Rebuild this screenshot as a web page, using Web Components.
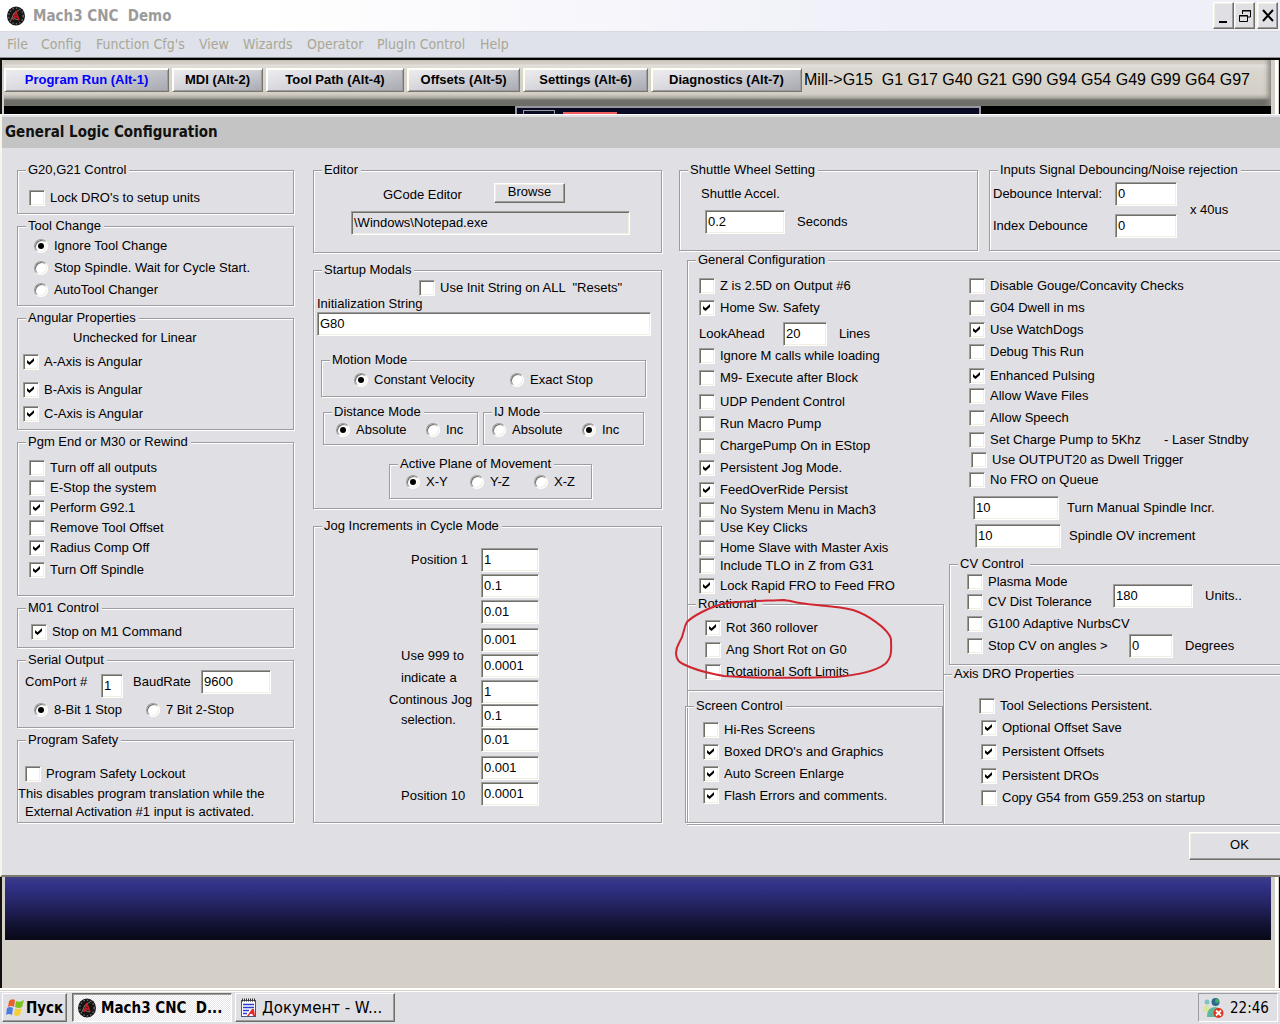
<!DOCTYPE html>
<html lang="en">
<head>
<meta charset="utf-8">
<title>Mach3 CNC Demo</title>
<style>
html, body { margin: 0; height: 100%; }
body { overflow: hidden; background: #d4d0c8; color: #000; font: 13px/16px "Liberation Sans", Arial, sans-serif; }
</style>
</head>
<body>
<mach-desktop></mach-desktop>
<script>
const define = (name, html, setup) => {
  const tpl = document.createElement('template');
  tpl.innerHTML = html;
  customElements.define(name, class extends HTMLElement {
    constructor() {
      super();
      this.attachShadow({ mode: 'open' }).append(tpl.content.cloneNode(true));
    }
    connectedCallback() { if (setup) setup(this, this.shadowRoot); }
  });
};

const logo = `<svg class="logo" width="20" height="20" viewBox="0 0 20 20" aria-hidden="true">
  <ellipse cx="10" cy="10" rx="9" ry="9.500" fill="#141414"/>
  <ellipse cx="10" cy="10" rx="7.200" ry="7.800" fill="none" stroke="#6d6d6d" stroke-width="1.4" stroke-dasharray="1.5 2"/>
  <path d="M5 14 8 7l5-3M6 12l7 2" stroke="#777" fill="none"/>
  <path d="M7 14l3-8 3 8M8 11h4" stroke="#d01c1c" stroke-width="1.5" fill="none"/>
</svg>`;

define('group-box', `
<style>
:host{display:block;position:relative;min-width:0}
fieldset{box-sizing:border-box;margin:0;min-width:0;min-height:100%;padding:0;border:1px solid #9d9da1;box-shadow:1px 1px 0 #fff, inset 1px 1px 0 #fff}
legend{margin-left:8px;padding:0 3px 0 2px;background:#e0dfe4;line-height:16px;white-space:pre}
.body{display:grid;grid-template-columns:minmax(0,1fr);grid-template-rows:var(--rows,auto);align-items:start;padding:var(--pad,0)}
</style>
<fieldset><legend></legend><div class="body"><slot></slot></div></fieldset>`,
(el, root) => {
  root.querySelector('legend').textContent = el.getAttribute('legend');
  el.addEventListener('option-picked', e => {
    e.stopPropagation();
    el.querySelectorAll('radio-option').forEach(o => { if (o !== e.target) o.shadowRoot.querySelector('input').checked = false; });
  });
});

define('check-option', `
<style>
:host{display:block}
label{display:flex;width:fit-content;align-items:flex-start;gap:5px;height:16px;line-height:15px;white-space:pre}
input{appearance:none;box-sizing:border-box;flex:none;width:16px;height:16px;margin:0;background:#fff;border:1px solid;border-color:#9d9da1 #fff #fff #9d9da1;box-shadow:inset 1px 1px 0 #716f64, inset -1px -1px 0 #f1efe2}
input:checked::before{content:"";display:block;width:7px;height:7px;margin:3px;background:#000;clip-path:polygon(0 28%,36% 60%,100% 0,100% 43%,36% 100%,0 70%)}
</style>
<label><input type="checkbox"><span><slot></slot></span></label>`,
(el, root) => { root.querySelector('input').checked = el.hasAttribute('checked'); });

define('radio-option', `
<style>
:host{display:block;flex:none}
label{display:flex;width:fit-content;align-items:flex-start;gap:6px;height:16px;line-height:15px;white-space:pre}
input{appearance:none;box-sizing:border-box;flex:none;width:14px;height:14px;margin:1px 0 0;background:#fff;border:1px solid;border-color:#9d9da1 #fff #fff #9d9da1;border-radius:50%;box-shadow:inset 1px 1px 0 #716f64, inset -1px -1px 0 #f1efe2}
input:checked::before{content:"";display:block;width:6px;height:6px;margin:3px;background:#000;border-radius:50%}
</style>
<label><input type="radio"><span><slot></slot></span></label>`,
(el, root) => {
  const input = root.querySelector('input');
  input.checked = el.hasAttribute('checked');
  input.addEventListener('change', () => el.dispatchEvent(new Event('option-picked', { bubbles: true })));
});

define('text-entry', `
<style>
:host{display:block}
label{display:flex;align-items:var(--align,center);white-space:pre}
.lead{flex:none;width:var(--lead,auto)}
.trail{margin-left:var(--trail,12px)}
input{box-sizing:border-box;width:var(--w,58px);height:24px;margin:0;padding:0 2px 2px;font:inherit;color:#000;background:var(--field,#fff);border:1px solid;border-color:#9d9da1 #fff #fff #9d9da1;box-shadow:inset 1px 1px 0 #716f64, inset -1px -1px 0 #f1efe2;border-radius:0;outline:0}
:host([stacked]) label{display:grid;grid-template-columns:auto 1fr;align-items:start}
:host([stacked]) .lead{grid-column:1/-1}
</style>
<label><span class="lead"><slot></slot></span><input type="text"><span class="trail"><slot name="trail"></slot></span></label>`,
(el, root) => {
  const input = root.querySelector('input');
  input.value = el.getAttribute('value');
  if (el.hasAttribute('name')) input.setAttribute('aria-label', el.getAttribute('name'));
});

define('push-button', `
<style>
:host{display:block}
button{box-sizing:border-box;width:100%;height:100%;margin:0;padding:0 0 2px;font:inherit;color:inherit;background:#e0dfe4;border:1px solid;border-color:#fff #716f64 #716f64 #fff;box-shadow:inset -1px -1px 0 #9d9da1, inset 1px 1px 0 #f1efe2;border-radius:0;display:flex;align-items:center;justify-content:center}
</style>
<button type="button"><slot></slot></button>`,
(el, root) => { if (el.hasAttribute('name')) root.querySelector('button').setAttribute('aria-label', el.getAttribute('name')); });

define('title-bar', `
<style>
:host{display:flex;align-items:center;height:31px;padding:0 2px 0 6px;box-sizing:border-box;background:linear-gradient(90deg,#fff 20%,#efeff8 70%)}
h1{flex:1;margin:0 0 0 7px;font:bold 15px/18px "DejaVu Sans Condensed","DejaVu Sans",sans-serif;color:#9b9b9b;white-space:pre}
.buttons{display:flex}
push-button{width:21px;height:27px}
push-button:last-child{margin-left:2px}
push-button svg{display:block;width:14px;height:20px}
</style>
${logo}<h1>Mach3 CNC  Demo</h1>
<div class="buttons">
<push-button name="Minimize"><svg viewBox="0 0 14 20"><path d="M2 16h8v2H2z"/></svg></push-button>
<push-button name="Restore"><svg viewBox="0 0 14 20" fill="none" stroke="#000"><path d="M4.500 9V5.500h8V12H10M4 6h9M1.500 10.500h8v6h-8zM1 11h9"/></svg></push-button>
<push-button name="Close"><svg viewBox="0 0 14 20" stroke="#000" stroke-width="2"><path d="M2 5l10 11M12 5 2 16"/></svg></push-button>
</div>`);

define('menu-bar', `
<style>
:host{display:block;background:#dfe2eb;border-top:1px solid #d8dae2;border-bottom:1px solid #8f8f8f}
nav{display:grid;grid-template-columns:34px 55px 103px 44px 64px 70px 103px auto;justify-content:start;padding-left:7px;font:14px/25px "DejaVu Sans Condensed","DejaVu Sans",sans-serif}
a{color:#a9a794;text-decoration:none;white-space:pre}
</style>
<nav><a href="#">File</a><a href="#">Config</a><a href="#">Function Cfg's</a><a href="#">View</a><a href="#">Wizards</a><a href="#">Operator</a><a href="#">PlugIn Control</a><a href="#">Help</a></nav>`);

define('screen-tabs', `
<style>
:host{display:block;background:#d4d0c8;border-top:2px solid #000;border-left:2px solid #111;border-right:1px solid #000}
.frame{margin-right:1px;border-right:3px solid #fff;padding:0 4px 0 2px}
.strip{display:flex;gap:3px;align-items:center;height:46px;box-sizing:border-box;padding:3px 0 9px;background:linear-gradient(#d4d0c8 4px,#e2dfda 5px,#d9d6ce 11px,#d3cfc7 34px,#aaa79f 38px,#706f69 40px,#6a6963);box-shadow:inset -5px 0 5px -2px #8a8880}
button{box-sizing:border-box;flex:none;height:24px;padding:0;font:bold 13px/20px "Liberation Sans",Arial,sans-serif;color:#000;background:linear-gradient(165deg,#eeeef2,#d0d0d6 50%,#a8a8b1);border:1px solid;border-color:#fff #77756c #77756c #fff;box-shadow:inset 1px 1px 0 #fffff0,inset -1px -1px 0 #9d9da1;white-space:pre}
button[aria-current]{color:#00f}
output{font-size:16px;white-space:pre;margin-left:-1px}
.view{height:8px;display:flex;justify-content:center;background:#000}
.view i{box-sizing:border-box;width:466px;margin-right:-221px;background:#0a0924;border:2px solid #9697a0;border-bottom:0;display:flex;align-items:flex-end;padding-left:6px;gap:8px}
.view b{height:4px;width:32px;box-sizing:border-box;border:1px solid #9b9b9b;border-bottom:0}
.view u{height:2px;width:54px;background:#f25f5f}
</style>
<div class="frame"><div class="strip">
<button type="button" aria-current="page" style="width:165px">Program Run (Alt-1)</button><button type="button" style="width:91px">MDI (Alt-2)</button><button type="button" style="width:138px">Tool Path (Alt-4)</button><button type="button" style="width:113px">Offsets (Alt-5)</button><button type="button" style="width:125px">Settings (Alt-6)</button><button type="button" style="width:151px">Diagnostics (Alt-7)</button>
<output>Mill-&gt;G15  G1 G17 G40 G21 G90 G94 G54 G49 G99 G64 G97</output></div>
<div class="view"><i><b></b><u></u></i></div></div>`);

define('config-dialog', `
<style>
:host{display:block;background:#e0dfe4;border-top:1px solid #fff;border-left:2px solid #f6f5ea;border-bottom:2px solid #7d7b70;overflow:hidden}
h2{margin:2px 0 0;padding:0 3px;background:#c4c4c4;font:bold 15px/31px "DejaVu Sans Condensed","DejaVu Sans",sans-serif;color:#111}
.columns{display:grid;grid-template-columns:277px 349px minmax(620px,1fr);column-gap:19px;padding:14px 0 0 15px;margin-right:-20px}
.stack{display:flex;flex-direction:column;gap:4px}
.stack.wide{gap:9px}
.line{display:flex;align-items:flex-start}
.indent{padding-left:50px}
p{margin:0;white-space:pre}
.units{--pad:12px 0 7px 11px}
.tool{--pad:4px 0 7px 16px;--rows:22px 22px 16px}
.angular{--pad:4px 0 7px 5px;--rows:24px 28px 24px 16px}
.end{--pad:10px 0 17px 11px;--rows:20px 20px 20px 20px 22px 16px}
.m01{--pad:8px 0 7px 13px}
.serial{--pad:2px 0 9px 7px}
.serial .ports{height:28px;justify-content:space-between;width:246px}
.serial text-entry:first-child{align-self:flex-end;--align:flex-start}
.serial .bits{padding:4px 0 0 9px}
.serial radio-option:first-child{width:112px}
.safety{--pad:18px 0 2px 0;--rows:20px 18px 16px}
.safety check-option,.safety .in{padding-left:7px}
.editor{--pad:5px 0 17px 37px;--rows:28px 24px}
.editor .line{padding-left:32px;align-items:flex-end}
.editor p{width:111px}
.editor push-button{width:71px;height:20px}
.modals{--pad:2px 11px 9px 3px}
.modals check-option{padding-left:102px}
.modals .init{--w:334px;margin-bottom:16px}
.motion{--pad:4px 0 8px 32px;margin:0 4px}
.motion radio-option:first-child{width:156px}
.pair{display:grid;grid-template-columns:155px 161px;gap:5px;padding:7px 0 11px 6px}
.distance{--pad:2px 0 6px 12px}
.ij{--pad:2px 0 6px 8px}
.pair radio-option:first-child{width:90px}
.plane{--pad:2px 0 8px 16px;width:203px;margin-left:72px}
.plane radio-option{width:64px}
.jog{--pad:14px 0 16px 75px}
.jog .grid{display:grid;grid-template-columns:92px auto}
.fields{display:grid;grid-template-rows:26px 26px 28px 26px 26px 24px 24px 28px 26px 24px}
.notes{display:grid;grid-template-rows:96px 22px 22px 20px 76px 16px;padding-top:4px}
.notes .in{padding-left:12px}
.notes .in2{padding-left:22px}
.right{margin-left:-2px}
.top{display:grid;grid-template-columns:299px 1fr;gap:11px;padding-bottom:1px}
.shuttle{--pad:8px 0 16px 21px;--w:80px}
.shuttle p{padding-bottom:8px}
.shuttle text-entry{padding-left:4px}
.debounce{--pad:4px 0 12px 3px}
.debounce .line{align-items:center;gap:1px}
.debounce .both{display:grid;gap:8px;--w:62px;--lead:122px}
.general{margin-left:8px}
.halves{display:grid;grid-template-columns:256px 1fr}
.a{--lead:84px;display:grid;padding:10px 0 0 11px;grid-template-rows:22px 22px 26px 22px 24px 22px 22px 22px 22px 20px 18px 20px 18px 20px 18px}
.rot{--pad:8px 0 10px 17px;--rows:22px 22px 16px;margin:0 0 7px -1px}
.screen{--pad:8px 0 18px 17px;--rows:22px 22px 22px 16px;margin:0 1px 1px -3px}
.b{display:grid;padding:10px 0 0 25px;grid-template-rows:22px 22px 22px 24px 20px 22px 22px 20px 20px 24px 28px 32px}
.b .charge{display:grid;grid-template-columns:195px auto}
.b .shift{padding-left:2px}
.b .more{padding-left:4px;--w:86px;--trail:8px}
.b .more + .more{padding-left:6px}
.cv{--pad:2px 0 6px 17px;margin-left:5px}
.cv .checks{display:grid;width:146px;grid-template-rows:20px 22px 22px 16px}
.cv .vals{display:grid;gap:26px;padding-top:10px}
.cv .vals text-entry + text-entry{padding-left:16px}
.axis{--pad:16px 0 18px 37px;--rows:22px 24px 24px 22px 16px;margin:1px 0 -1px -1px}
.axis check-option:first-child{margin-left:-2px}
.actions{display:flex;justify-content:flex-end;padding:7px 0 15px;margin-right:-10px}
.actions push-button{width:101px;height:28px}
.mark{position:absolute;left:-12px;top:0;width:220px;height:88px;pointer-events:none;overflow:visible}
</style>
<h2>General Logic Configuration</h2>
<div class="columns">
<div class="stack">
  <group-box class="units" legend="G20,G21 Control"><check-option>Lock DRO's to setup units</check-option></group-box>
  <group-box class="tool" legend="Tool Change"><radio-option checked>Ignore Tool Change</radio-option><radio-option>Stop Spindle. Wait for Cycle Start.</radio-option><radio-option>AutoTool Changer</radio-option></group-box>
  <group-box class="angular" legend="Angular Properties"><p class="indent">Unchecked for Linear</p><check-option checked>A-Axis is Angular</check-option><check-option checked>B-Axis is Angular</check-option><check-option checked>C-Axis is Angular</check-option></group-box>
  <group-box class="end" legend="Pgm End or M30 or Rewind"><check-option>Turn off all outputs</check-option><check-option>E-Stop the system</check-option><check-option checked>Perform G92.1</check-option><check-option>Remove Tool Offset</check-option><check-option checked>Radius Comp Off</check-option><check-option checked>Turn Off Spindle</check-option></group-box>
  <group-box class="m01" legend="M01 Control"><check-option checked>Stop on M1 Command</check-option></group-box>
  <group-box class="serial" legend="Serial Output">
    <div class="line ports"><text-entry value="1" style="--lead:76px;--w:22px;--trail:0px">ComPort #</text-entry><text-entry value="9600" style="--lead:68px;--w:70px;--trail:0px">BaudRate</text-entry></div>
    <div class="line bits"><radio-option checked>8-Bit 1 Stop</radio-option><radio-option>7 Bit 2-Stop</radio-option></div>
  </group-box>
  <group-box class="safety" legend="Program Safety"><check-option>Program Safety Lockout</check-option><p>This disables program translation while the</p><p class="in">External Activation #1 input is activated.</p></group-box>
</div>
<div class="stack wide">
  <group-box class="editor" legend="Editor"><div class="line"><p>GCode Editor</p><push-button>Browse</push-button></div><text-entry name="GCode Editor" value="\\Windows\\Notepad.exe" style="--w:279px;--field:#e0dfe4"></text-entry></group-box>
  <group-box class="modals" legend="Startup Modals">
    <check-option>Use Init String on ALL  "Resets"</check-option>
    <text-entry class="init" stacked value="G80">Initialization String</text-entry>
    <group-box class="motion" legend="Motion Mode"><div class="line"><radio-option checked>Constant Velocity</radio-option><radio-option>Exact Stop</radio-option></div></group-box>
    <div class="pair">
      <group-box class="distance" legend="Distance Mode"><div class="line"><radio-option checked>Absolute</radio-option><radio-option>Inc</radio-option></div></group-box>
      <group-box class="ij" legend="IJ Mode"><div class="line"><radio-option>Absolute</radio-option><radio-option checked>Inc</radio-option></div></group-box>
    </div>
    <group-box class="plane" legend="Active Plane of Movement"><div class="line"><radio-option checked>X-Y</radio-option><radio-option>Y-Z</radio-option><radio-option>X-Z</radio-option></div></group-box>
  </group-box>
  <group-box class="jog" legend="Jog Increments in Cycle Mode"><div class="grid">
    <div class="notes"><p class="in2">Position 1</p><p class="in">Use 999 to</p><p class="in">indicate a</p><p>Continous Jog</p><p class="in">selection.</p><p class="in">Position 10</p></div>
    <div class="fields"><text-entry name="Position 1" value="1"></text-entry><text-entry name="Position 2" value="0.1"></text-entry><text-entry name="Position 3" value="0.01"></text-entry><text-entry name="Position 4" value="0.001"></text-entry><text-entry name="Position 5" value="0.0001"></text-entry><text-entry name="Position 6" value="1"></text-entry><text-entry name="Position 7" value="0.1"></text-entry><text-entry name="Position 8" value="0.01"></text-entry><text-entry name="Position 9" value="0.001"></text-entry><text-entry name="Position 10" value="0.0001"></text-entry></div>
  </div></group-box>
</div>
<div class="right">
  <div class="top">
    <group-box class="shuttle" legend="Shuttle Wheel Setting"><p>Shuttle Accel.</p><text-entry name="Shuttle Accel." value="0.2"><span slot="trail">Seconds</span></text-entry></group-box>
    <group-box class="debounce" legend="Inputs Signal Debouncing/Noise rejection"><div class="line"><div class="both"><text-entry value="0">Debounce Interval:</text-entry><text-entry value="0">Index Debounce</text-entry></div><p>x 40us</p></div></group-box>
  </div>
  <group-box class="general" legend="General Configuration"><div class="halves">
    <div>
      <div class="a"><check-option>Z is 2.5D on Output #6</check-option><check-option checked>Home Sw. Safety</check-option><text-entry value="20" style="--w:44px">LookAhead<span slot="trail">Lines</span></text-entry><check-option>Ignore M calls while loading</check-option><check-option>M9- Execute after Block</check-option><check-option>UDP Pendent Control</check-option><check-option>Run Macro Pump</check-option><check-option>ChargePump On in EStop</check-option><check-option checked>Persistent Jog Mode.</check-option><check-option checked>FeedOverRide Persist</check-option><check-option>No System Menu in Mach3</check-option><check-option>Use Key Clicks</check-option><check-option>Home Slave with Master Axis</check-option><check-option>Include TLO in Z from G31</check-option><check-option checked>Lock Rapid FRO to Feed FRO</check-option></div>
      <group-box class="rot" legend="Rotational "><check-option checked>Rot 360 rollover</check-option><check-option>Ang Short Rot on G0</check-option><check-option>Rotational Soft Limits</check-option>
        <svg class="mark" viewBox="675 596 220 88" fill="none" stroke="#cf2630" stroke-width="2" stroke-linecap="round" aria-hidden="true"><path d="M785 600C760 601 735 601 722 604C708 608 693 616 687 622C683 628 685 634 679 643C675 650 674 660 683 664C695 670 712 674 724 676C760 679 800 678 836 677C858 675 876 671 885 664C893 657 891 648 891 639C888 628 866 614 853 610C836 605 815 606 800 603C793 602 788 600 782 600"/></svg></group-box>
      <group-box class="screen" legend="Screen Control"><check-option>Hi-Res Screens</check-option><check-option checked>Boxed DRO's and Graphics</check-option><check-option checked>Auto Screen Enlarge</check-option><check-option checked>Flash Errors and comments.</check-option></group-box>
    </div>
    <div>
      <div class="b"><check-option>Disable Gouge/Concavity Checks</check-option><check-option>G04 Dwell in ms</check-option><check-option checked>Use WatchDogs</check-option><check-option>Debug This Run</check-option><check-option checked>Enhanced Pulsing</check-option><check-option>Allow Wave Files</check-option><check-option>Allow Speech</check-option><div class="charge"><check-option>Set Charge Pump to 5Khz</check-option><p>- Laser Stndby</p></div><check-option class="shift">Use OUTPUT20 as Dwell Trigger</check-option><check-option>No FRO on Queue</check-option><text-entry class="more" value="10"><span slot="trail">Turn Manual Spindle Incr.</span></text-entry><text-entry class="more" value="10"><span slot="trail">Spindle OV increment</span></text-entry></div>
      <group-box class="cv" legend="CV Control "><div class="line"><div class="checks"><check-option>Plasma Mode</check-option><check-option>CV Dist Tolerance</check-option><check-option>G100 Adaptive NurbsCV</check-option><check-option>Stop CV on angles &gt;</check-option></div><div class="vals"><text-entry name="CV distance" value="180" style="--w:80px"><span slot="trail">Units..</span></text-entry><text-entry name="CV angle" value="0" style="--w:44px"><span slot="trail">Degrees</span></text-entry></div></div></group-box>
      <group-box class="axis" legend="Axis DRO Properties"><check-option>Tool Selections Persistent.</check-option><check-option checked>Optional Offset Save</check-option><check-option checked>Persistent Offsets</check-option><check-option checked>Persistent DROs</check-option><check-option>Copy G54 from G59.253 on startup</check-option></group-box>
    </div>
  </div></group-box>
</div>
</div>
<div class="actions"><push-button>OK</push-button></div>`);

define('screen-floor', `
<style>
:host{display:flex;flex:1;background:#d4d0c8;border-left:2px solid #111;border-right:1px solid #000}
div{flex:1;margin-right:1px;border-right:3px solid #fff;padding:0 4px 0 3px}
i{display:block;height:63px;background:linear-gradient(#3f3f86,#32328a 12%,#232360 45%,#10102e 80%,#080816)}
</style><div><i></i></div>`);

define('task-bar', `
<style>
:host{display:flex;box-sizing:border-box;height:36px;padding:3px 2px 2px;gap:5px;align-items:stretch;background:#e0dfe4;border-top:2px solid #fff;box-shadow:inset 0 1px 0 #d4d0c8,inset 0 2px 0 #fff;font:15px/18px "DejaVu Sans Condensed","DejaVu Sans",sans-serif}
button{box-sizing:border-box;display:flex;align-items:center;gap:4px;padding:0 4px;font:inherit;color:#000;background:#e0dfe4;border:1px solid;border-color:#fff #716f64 #716f64 #fff;box-shadow:inset -1px -1px 0 #9d9da1;white-space:pre}
.start{width:65px;font-weight:bold;padding:0 2px;gap:1px}
.task{width:160px;font-family:"DejaVu Sans",sans-serif}
.task + .task{margin-left:-2px}
.task.on{font-family:inherit;font-weight:bold;border-color:#716f64 #fff #fff #716f64;box-shadow:inset 1px 1px 0 #9d9da1;background:repeating-conic-gradient(#fff 0 25%,#e6e5ea 0 50%) 0 0/2px 2px}
svg{flex:none;display:block}
.tray{margin-left:auto;box-sizing:border-box;width:80px;display:flex;align-items:center;gap:6px;padding-left:4px;border:1px solid;border-color:#9d9da1 #fff #fff #9d9da1}
</style>
<button type="button" class="start"><svg width="20" height="20" viewBox="0 0 20 20" aria-hidden="true"><path d="M4 3q3-3 6-1L9 9Q6 7 3 9z" fill="#e8602c"/><path d="M11 3q4 2 8-1l-2 7q-3 2-7 0z" fill="#7cc41c"/><path d="M2 10q3-2 6 0l-1 7q-3-2-6 0z" fill="#4a7fe0"/><path d="M10 10q3 2 7 0l-2 7q-3 2-6 0z" fill="#f6cf3c"/></svg>Пуск</button>
<button type="button" class="task on">${logo}Mach3 CNC  D...</button>
<button type="button" class="task"><svg width="18" height="20" viewBox="0 0 18 20" aria-hidden="true"><rect x="1.500" y="2.500" width="14" height="16" fill="#fff" stroke="#46587a"/><path d="M2 2h13" stroke="#333" stroke-width="3" stroke-dasharray="1 1"/><path d="M3 6.500h11M3 9.500h11M3 12.500h6M3 15.500h4" stroke="#2a3bd0" stroke-width="1.500"/><path d="M7 18l5-7h2l1 7h-2l-.5-2H10l-1 2z" fill="#e3282c"/></svg>Документ - W...</button>
<div class="tray"><svg width="21" height="22" viewBox="0 0 21 22" aria-hidden="true"><circle cx="4" cy="5" r="2.500" fill="#7ec4c4"/><path d="M0 15q0-7 5-7l3 7z" fill="#d8e4a0"/><circle cx="12.500" cy="5" r="4" fill="#2b6a8a"/><circle cx="14" cy="4" r="2" fill="#3fae6a"/><path d="M4 20q0-10 8-10t7 10z" fill="#5fb69a"/><circle cx="15.500" cy="16" r="5" fill="#e0321c"/><path d="M13 13.500l5 5m0-5l-5 5" stroke="#fff" stroke-width="1.800"/></svg><time>22:46</time></div>`);

define('mach-desktop', `
<style>:host{display:flex;flex-direction:column;height:100vh}</style>
<title-bar></title-bar><menu-bar></menu-bar><screen-tabs></screen-tabs>
<config-dialog></config-dialog><screen-floor></screen-floor><task-bar></task-bar>`);
</script>
</body>
</html>
